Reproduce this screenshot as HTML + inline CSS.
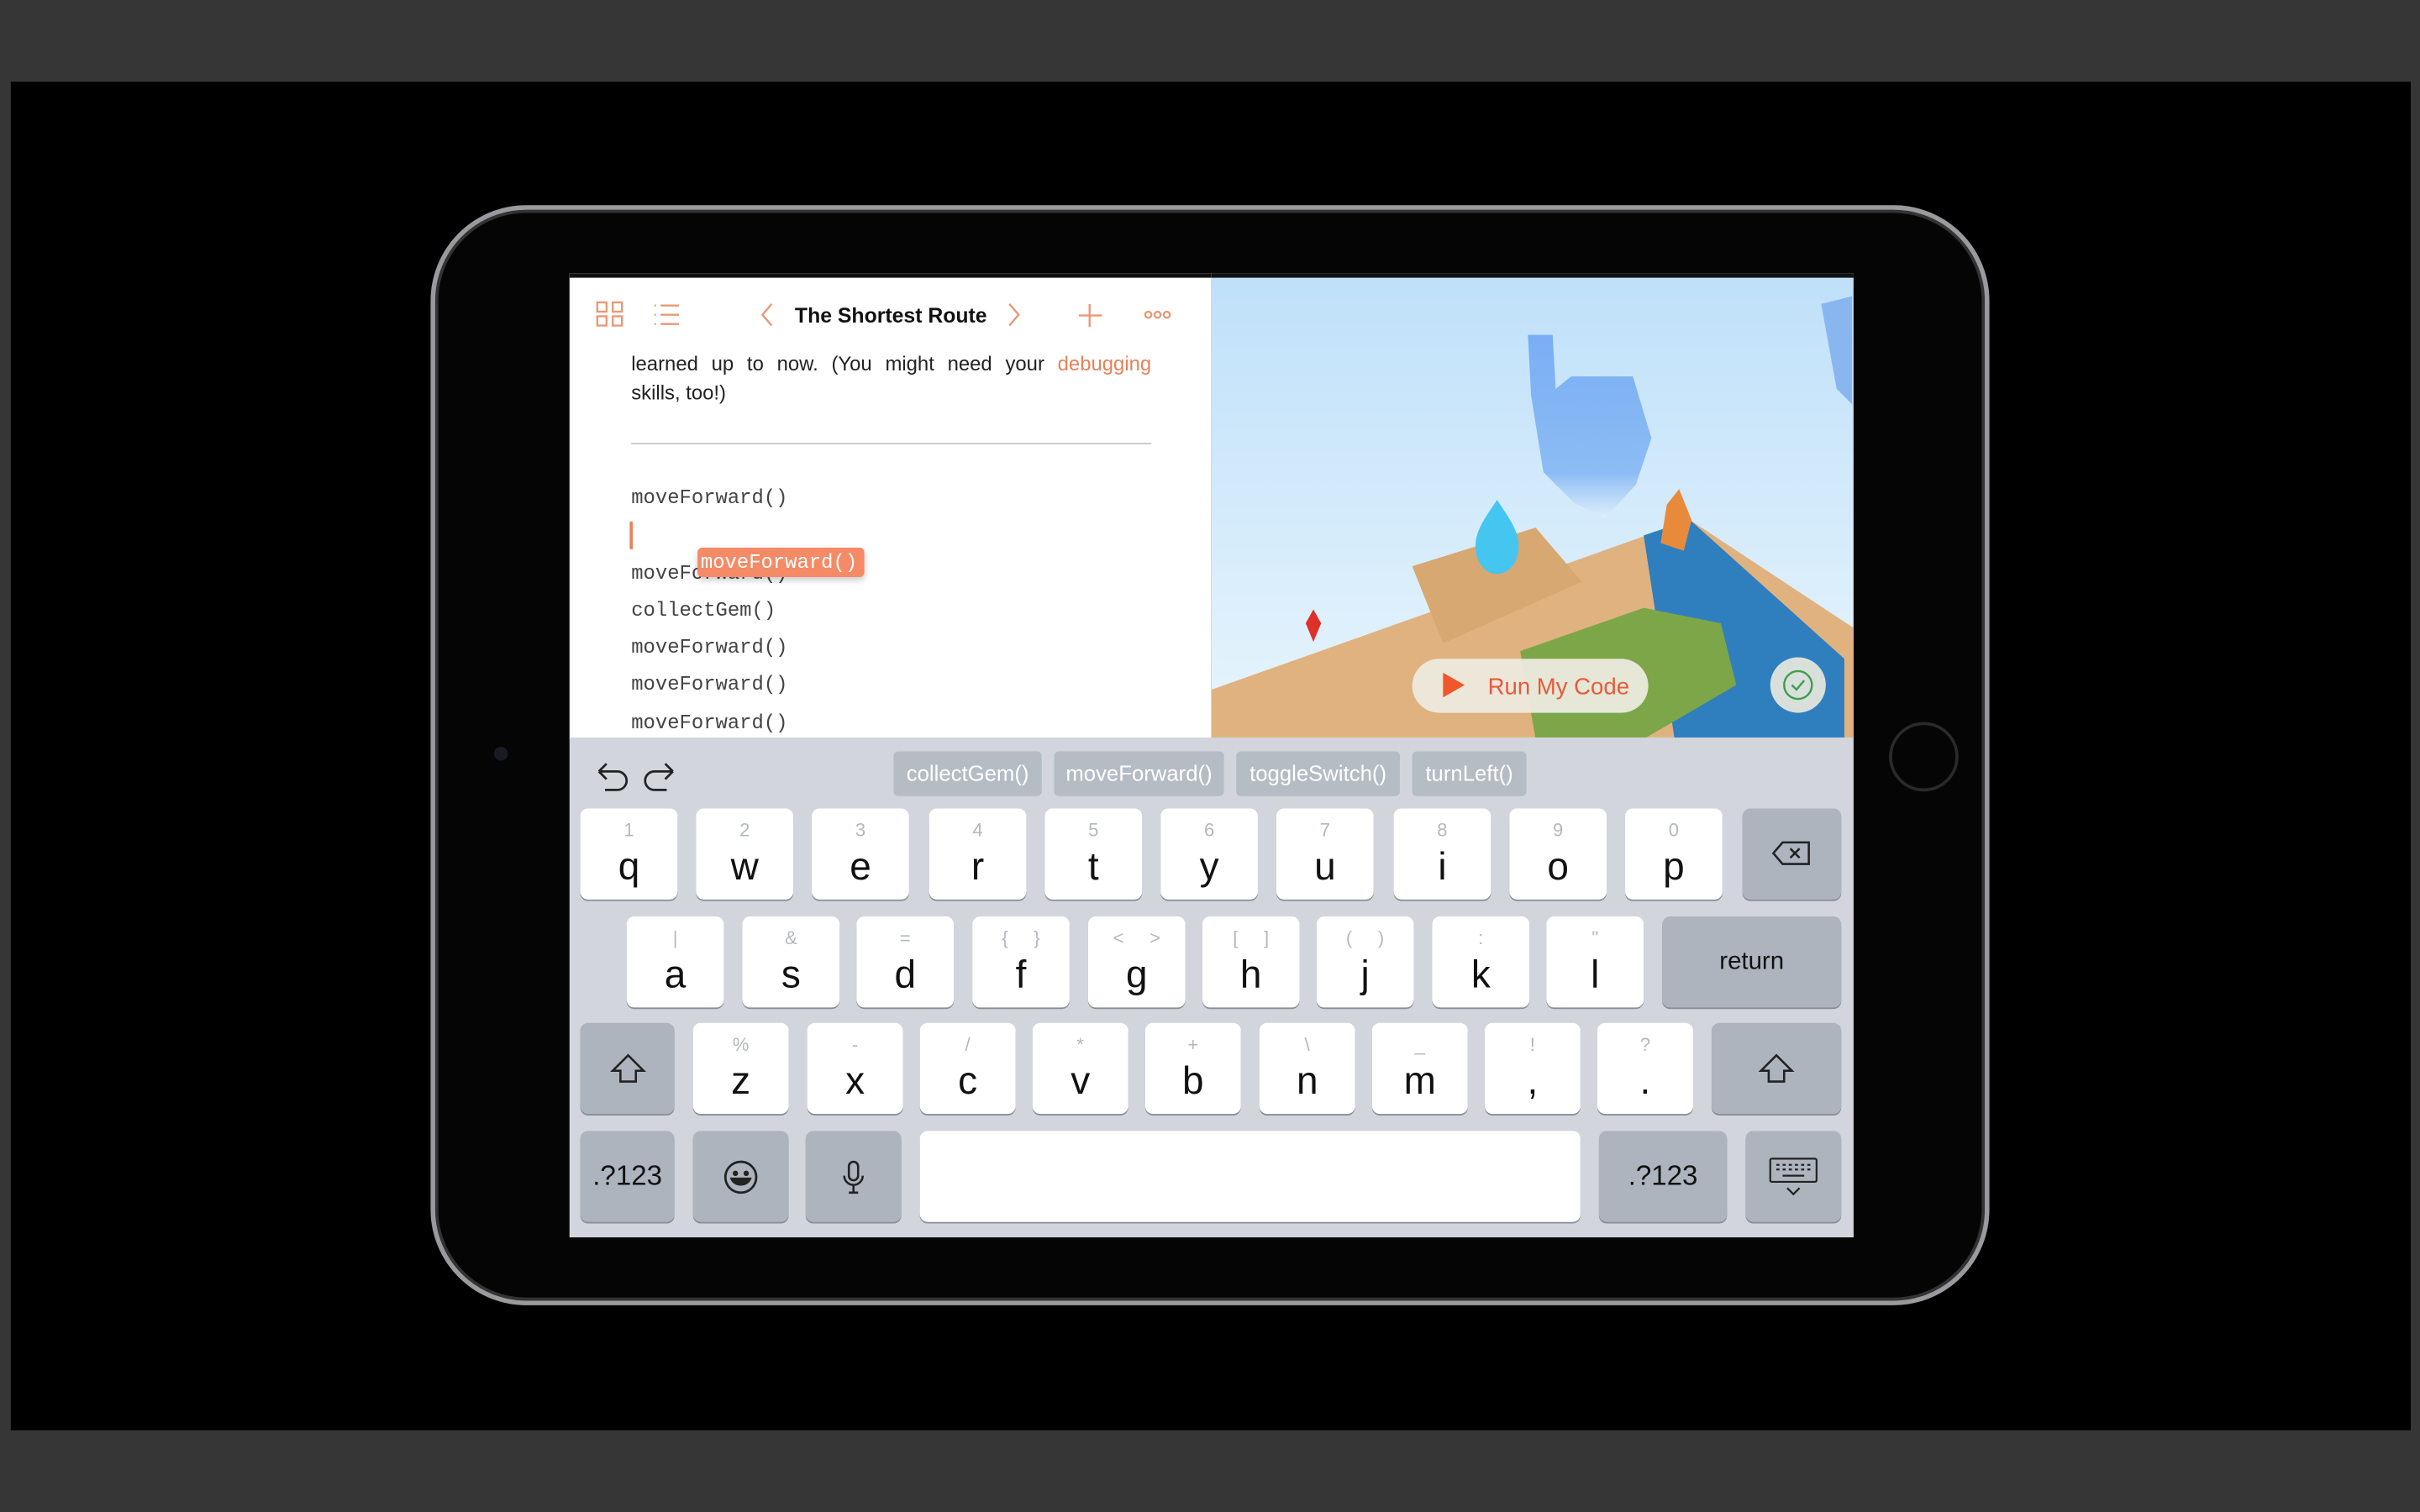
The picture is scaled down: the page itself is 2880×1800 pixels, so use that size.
<!DOCTYPE html>
<html><head><meta charset="utf-8"><style>
*{margin:0;padding:0;box-sizing:border-box}
html,body{width:2880px;height:1800px;overflow:hidden;background:#363636}
#w{position:absolute;left:0;top:0;width:1568px;height:980px;transform:scale(1.836735);transform-origin:0 0;font-family:"Liberation Sans",sans-serif}
.a{position:absolute}
.k{position:absolute;background:#fff;border-radius:5px;box-shadow:0 1px 0 #888e96;text-align:center;color:#111}
.k .s{position:absolute;top:7px;left:0;right:0;font-size:12px;color:#b4b8be}
.k .m{position:absolute;top:24px;left:0;right:0;font-size:25px}
.g{background:#adb4bd}
.sc{position:absolute;top:487px;height:29px;background:#b5bcc4;color:#fff;font-size:14px;line-height:29px;text-align:center;border-radius:3px}
.code{position:absolute;left:409px;font-family:"Liberation Mono",monospace;font-size:13px;color:#444}
</style></head><body><div id="w">
<div class="a" style="left:7px;top:53px;width:1555px;height:874px;background:#000"></div>
<div class="a" style="left:279px;top:133px;width:1010px;height:713px;border-radius:62px;border:3px solid #9a9a9e;background:#050505;box-shadow:inset 0 0 0 2px #333"></div>
<div class="a" style="left:320px;top:484px;width:9px;height:9px;border-radius:50%;background:#1a1a22"></div>
<div class="a" style="left:1224px;top:468px;width:45px;height:45px;border-radius:50%;border:2px solid #2a2a2a"></div>
<div class="a" style="left:369px;top:177px;width:416px;height:302px;background:#fff;overflow:hidden">
<div class="a" style="left:0;top:0;width:416px;height:3px;background:#111"></div>
</div>
<svg class="a" style="left:380px;top:190px" width="400" height="30" viewBox="0 0 400 30" fill="none" stroke="#e79a77" stroke-width="1.3">
<rect x="7" y="6" width="6" height="6"/><rect x="17" y="6" width="6" height="6"/><rect x="7" y="15" width="6" height="6"/><rect x="17" y="15" width="6" height="6"/>
<path d="M48 8h12M48 14h12M48 20h12"/><path d="M44 8h1M44 14h1M44 20h1"/>
<path d="M120 7l-6 7 6 7"/><path d="M274 7l6 7-6 7"/>
<path d="M326 7v15M319 14.5h15"/>
<circle cx="364" cy="14" r="2"/><circle cx="370" cy="14" r="2"/><circle cx="376" cy="14" r="2"/>
</svg>
<div class="a" style="left:515px;top:197px;font-size:13.5px;font-weight:bold;color:#111">The Shortest Route</div>
<div class="a" style="left:409px;top:226px;width:337px;font-size:13px;color:#222;line-height:19px;text-align:justify;text-align-last:justify">learned up to now. (You might need your <span style="color:#e8825a">debugging</span></div>
<div class="a" style="left:409px;top:245px;font-size:13px;color:#222;line-height:19px">skills, too!)</div>
<div class="a" style="left:409px;top:287px;width:337px;height:1px;background:#c8c8c8"></div>
<div class="code" style="top:315px">moveForward()</div>
<div class="a" style="left:408px;top:338px;width:2px;height:18px;background:#e8825a"></div>
<div class="code" style="top:364px">moveForward()</div>
<div class="a" style="left:452px;top:355px;width:108px;height:19px;background:#f58a66;border-radius:3px;color:#fff;font-family:'Liberation Mono',monospace;font-size:13px;line-height:19px;padding-left:2px;box-shadow:0 2px 4px rgba(0,0,0,.2)">moveForward()</div>
<div class="code" style="top:388px">collectGem()</div>
<div class="code" style="top:412px">moveForward()</div>
<div class="code" style="top:436px">moveForward()</div>
<div class="code" style="top:461px">moveForward()</div>
<svg class="a" style="left:785px;top:177px" width="416" height="302" viewBox="0 0 416 302">
<defs><linearGradient id="sky" x1="0" y1="0" x2="0" y2="1"><stop offset="0" stop-color="#bfe0fa"/><stop offset="1" stop-color="#e8f5fc"/></linearGradient>
<linearGradient id="isl" x1="0" y1="0" x2="0" y2="1"><stop offset="0" stop-color="#7aaef5"/><stop offset=".75" stop-color="#8cbcf4"/><stop offset="1" stop-color="#e0effc"/></linearGradient></defs>
<rect width="416" height="302" fill="url(#sky)"/>
<rect width="416" height="3" fill="#111"/>
<path d="M205 40h16l2 35 10-8h40l12 40-10 30-20 22-20-10-20-20-8-50z" fill="url(#isl)"/>
<path d="M395 20l20-5v70l-10-10z" fill="#8ab6f0"/>
<path d="M0 270L310 160 416 230V302H0z" fill="#e0b27f"/>
<path d="M280 170l30-10 100 90v52H300z" fill="#2f7fbf"/>
<path d="M200 245l80-28 50 10 10 40-60 35H210z" fill="#7ca648"/>
<path d="M130 190l80-25 30 35-90 40z" fill="#d7a872"/>
<path d="M295 150l8-10 8 20 -5 20-15 -5z" fill="#e88a3c"/>
<path d="M185 147c-8 12-14 20-14 30 0 10 6 18 14 18s14-8 14-18c0-10-6-18-14-30z" fill="#45c6f0"/>
<path d="M66 218l-5 9 5 12 5-12z" fill="#e0302a"/>
<rect x="130" y="250" width="153" height="35" rx="17.5" fill="#eceade" opacity=".95"/>
<path d="M150 259v16l14-8z" fill="#f0572a"/>
<text x="179" y="273" font-family="Liberation Sans" font-size="15" fill="#e85a3a">Run My Code</text>
<circle cx="380" cy="267" r="18" fill="#eceade" opacity=".9"/>
<circle cx="380" cy="267" r="9" fill="none" stroke="#3aa04a" stroke-width="1.3"/>
<path d="M376 267l3 3 5-6" fill="none" stroke="#3aa04a" stroke-width="1.3"/>
</svg>
<div class="a" style="left:369px;top:478px;width:832px;height:324px;background:#d2d5db"></div>
<svg class="a" style="left:384px;top:492px" width="60" height="24" fill="none" stroke="#222" stroke-width="1.5"><path d="M4 8h12a6 6 0 0 1 0 12H8M4 8l5-5M4 8l5 5"/><path d="M52 8H40a6 6 0 0 0 0 12h8M52 8l-5-5M52 8l-5 5"/></svg>
<div class="sc" style="left:579px;width:96px">collectGem()</div>
<div class="sc" style="left:683px;width:110px">moveForward()</div>
<div class="sc" style="left:801px;width:106px">toggleSwitch()</div>
<div class="sc" style="left:915px;width:74px">turnLeft()</div>
<div class="k" style="left:376px;top:524px;width:63px;height:59px"><div class="s">1</div><div class="m">q</div></div>
<div class="k" style="left:451px;top:524px;width:63px;height:59px"><div class="s">2</div><div class="m">w</div></div>
<div class="k" style="left:526px;top:524px;width:63px;height:59px"><div class="s">3</div><div class="m">e</div></div>
<div class="k" style="left:602px;top:524px;width:63px;height:59px"><div class="s">4</div><div class="m">r</div></div>
<div class="k" style="left:677px;top:524px;width:63px;height:59px"><div class="s">5</div><div class="m">t</div></div>
<div class="k" style="left:752px;top:524px;width:63px;height:59px"><div class="s">6</div><div class="m">y</div></div>
<div class="k" style="left:827px;top:524px;width:63px;height:59px"><div class="s">7</div><div class="m">u</div></div>
<div class="k" style="left:903px;top:524px;width:63px;height:59px"><div class="s">8</div><div class="m">i</div></div>
<div class="k" style="left:978px;top:524px;width:63px;height:59px"><div class="s">9</div><div class="m">o</div></div>
<div class="k" style="left:1053px;top:524px;width:63px;height:59px"><div class="s">0</div><div class="m">p</div></div>
<div class="k g" style="left:1129px;top:524px;width:64px;height:59px"><svg style="margin-top:20px" width="28" height="18" fill="none" stroke="#222" stroke-width="1.4"><path d="M8 2h17v14H8L2 9z"/><path d="M13 6l6 6M19 6l-6 6"/></svg></div>
<div class="k" style="left:406px;top:594px;width:63px;height:59px"><div class="s">|</div><div class="m">a</div></div>
<div class="k" style="left:481px;top:594px;width:63px;height:59px"><div class="s">&amp;</div><div class="m">s</div></div>
<div class="k" style="left:555px;top:594px;width:63px;height:59px"><div class="s">=</div><div class="m">d</div></div>
<div class="k" style="left:630px;top:594px;width:63px;height:59px"><div class="s">{&nbsp;&nbsp;&nbsp;&nbsp;&nbsp;}</div><div class="m">f</div></div>
<div class="k" style="left:705px;top:594px;width:63px;height:59px"><div class="s">&lt;&nbsp;&nbsp;&nbsp;&nbsp;&nbsp;&gt;</div><div class="m">g</div></div>
<div class="k" style="left:779px;top:594px;width:63px;height:59px"><div class="s">[&nbsp;&nbsp;&nbsp;&nbsp;&nbsp;]</div><div class="m">h</div></div>
<div class="k" style="left:853px;top:594px;width:63px;height:59px"><div class="s">(&nbsp;&nbsp;&nbsp;&nbsp;&nbsp;)</div><div class="m">j</div></div>
<div class="k" style="left:928px;top:594px;width:63px;height:59px"><div class="s">:</div><div class="m">k</div></div>
<div class="k" style="left:1002px;top:594px;width:63px;height:59px"><div class="s">"</div><div class="m">l</div></div>
<div class="k g" style="left:1077px;top:594px;width:116px;height:59px;font-size:16px;line-height:59px">return</div>
<div class="k g" style="left:376px;top:663px;width:61px;height:59px"><svg style="margin-top:19px" width="24" height="22" fill="none" stroke="#222" stroke-width="1.4"><path d="M12 2L2 12h5v7h10v-7h5z"/></svg></div>
<div class="k" style="left:449px;top:663px;width:62px;height:59px"><div class="s">%</div><div class="m">z</div></div>
<div class="k" style="left:523px;top:663px;width:62px;height:59px"><div class="s">-</div><div class="m">x</div></div>
<div class="k" style="left:596px;top:663px;width:62px;height:59px"><div class="s">/</div><div class="m">c</div></div>
<div class="k" style="left:669px;top:663px;width:62px;height:59px"><div class="s">*</div><div class="m">v</div></div>
<div class="k" style="left:742px;top:663px;width:62px;height:59px"><div class="s">+</div><div class="m">b</div></div>
<div class="k" style="left:816px;top:663px;width:62px;height:59px"><div class="s">\</div><div class="m">n</div></div>
<div class="k" style="left:889px;top:663px;width:62px;height:59px"><div class="s">_</div><div class="m">m</div></div>
<div class="k" style="left:962px;top:663px;width:62px;height:59px"><div class="s">!</div><div class="m">,</div></div>
<div class="k" style="left:1035px;top:663px;width:62px;height:59px"><div class="s">?</div><div class="m">.</div></div>
<div class="k g" style="left:1109px;top:663px;width:84px;height:59px"><svg style="margin-top:19px" width="24" height="22" fill="none" stroke="#222" stroke-width="1.4"><path d="M12 2L2 12h5v7h10v-7h5z"/></svg></div>
<div class="k g" style="left:376px;top:733px;width:61px;height:59px;font-size:18px;line-height:59px">.?123</div>
<div class="k g" style="left:449px;top:733px;width:62px;height:59px"><svg style="margin-top:18px" width="24" height="24" fill="none" stroke="#222" stroke-width="1.5"><circle cx="12" cy="12" r="10"/><circle cx="8.5" cy="9.5" r="1" fill="#222"/><circle cx="15.5" cy="9.5" r="1" fill="#222"/><path d="M6 13c2 5 10 5 12 0z" fill="#222"/></svg></div>
<div class="k g" style="left:522px;top:733px;width:62px;height:59px"><svg style="margin-top:18px" width="20" height="24" fill="none" stroke="#222" stroke-width="1.4"><rect x="7" y="2" width="6" height="12" rx="3"/><path d="M4 11a6 6 0 0 0 12 0M10 17v5M7 22h6"/></svg></div>
<div class="k" style="left:596px;top:733px;width:428px;height:59px"></div>
<div class="k g" style="left:1036px;top:733px;width:83px;height:59px;font-size:18px;line-height:59px">.?123</div>
<div class="k g" style="left:1131px;top:733px;width:62px;height:59px"><svg style="margin-top:16px" width="34" height="28" fill="none" stroke="#222" stroke-width="1.2"><rect x="2" y="2" width="30" height="15" rx="1"/><path d="M6 6h2M10 6h2M14 6h2M18 6h2M22 6h2M26 6h2M6 9h2M10 9h2M14 9h2M18 9h2M22 9h2M26 9h2M10 13h14M13 21l4 4 4-4"/></svg></div>
</div></body></html>
